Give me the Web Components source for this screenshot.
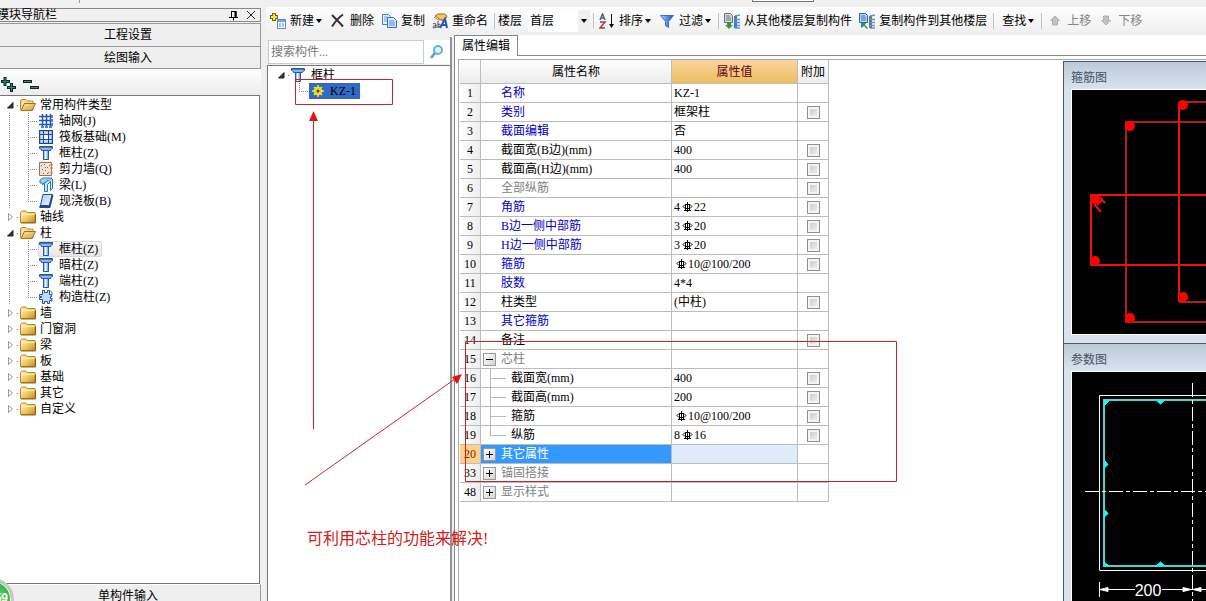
<!DOCTYPE html>
<html lang="zh-CN">
<head>
<meta charset="utf-8">
<title>属性编辑</title>
<style>
html, body { margin: 0; height: 100%; overflow: hidden; }
body { font: 12px/16px "Liberation Serif", "Noto Sans CJK SC", serif; color: #000; background: #f0f0f0; }
</style>
</head>
<body>
<app-shell></app-shell>
<script>
const GLYPHS = {
  folder: `<defs><linearGradient id="g" x2="1" y2="1"><stop offset="0" stop-color="#fff3bd"/><stop offset=".5" stop-color="#f4cd62"/><stop offset="1" stop-color="#c98a10"/></linearGradient></defs><path d="M.5 13.500V3.500L2 2h4l1.500 1.500h7.500v10z" fill="url(#g)" stroke="#a98a4a"/><path d="M1.500 5.500h13" stroke="#fff6d0"/><path d="M1 14h14.500V5" stroke="#8a6414" fill="none"/>`,
  folderopen: `<defs><linearGradient id="g" x2="1" y2="1"><stop offset="0" stop-color="#fff0b0"/><stop offset="1" stop-color="#d89a20"/></linearGradient></defs><path d="M.5 12.500v-9L2 2.500h4L7.500 4H13v9H1z" fill="#f4dc92" stroke="#a98a4a"/><path d="M1 13.500L4.500 6.500h11L12 13.500z" fill="url(#g)" stroke="#9a7420"/>`,
  grid: `<path d="M3.500 1v12M7.500 1v12M11.500 1v12M0 3.500h13M0 7.500h13M0 11.500h13" stroke="#2458b0" stroke-width="1.500" fill="none"/><path d="M2 13h3v2H2zM6 13h3v2H6zM10 13h3v2h-3zM12 2h2v3h-2zM12 6h2v3h-2zM12 10h2v3h-2z" fill="#4f83cc"/>`,
  raft: `<path d="M0 1h14v14H0z" fill="#1d4794"/><path d="M1.500 2.500h11v11h-11z" fill="#c4dafc" stroke="#9cbcf0"/><path d="M4.500 2v12M9.500 2v12M1 5.500h12M1 10.500h12" stroke="#1d4794"/><path d="M5 6h4v4H5z" fill="#fff"/>`,
  column: `<defs><linearGradient id="g"><stop offset="0" stop-color="#5a90e0"/><stop offset=".4" stop-color="#f4faff"/><stop offset="1" stop-color="#5a90dc"/></linearGradient></defs><path d="M.5 1.500h13v2l-2 1v1h-9v-1l-2-1z" fill="#8ab6f4" stroke="#2456a4"/><path d="M1 2.500h12" stroke="#4678c8"/><path d="M4.500 5.500h5v9h-5z" fill="url(#g)" stroke="#2456b0"/>`,
  wall: `<path d="M.5 1.500h12v13H.5z" fill="#efe4dc" stroke="#a86a48"/><path d="M2 4h1v1H2zM5 3h1v1H5zM8 6h1v1H8zM3 8h1v1H3zM6 9h1v1H6zM9 11h1v1H9zM4 12h1v1H4zM10 4h1v1h-1zM6 6h1v1H6zM8 12h1v1H8z" fill="#8a6a5a"/><path d="M11 4h3M11 7h3M11 12h3M12.500 2v12" stroke="#d07830" fill="none"/>`,
  beam: `<path d="M1 3l3-2h9l-2 3H8L5 7 3 6H1z" fill="#9fd0f4" stroke="#2f78b8"/><path d="M5.500 6.500v8h3v-7l3-3v9l2-2V2M3 8l6-5" fill="#c4e4fb" stroke="#2f78b8"/>`,
  slab: `<defs><linearGradient id="g" x2="1" y2="1"><stop offset="0" stop-color="#a8c8f8"/><stop offset="1" stop-color="#fff"/></linearGradient></defs><path d="M1 14.500L4 1.500h9.500l-3 11H1.500" fill="url(#g)" stroke="#1e4c9c"/><path d="M.5 14h10L13.500 2" fill="none" stroke="#1e4c9c" stroke-width="2"/>`,
  struct: `<path d="M3.500 1.500h2v2h3v-2h2v4h2v2h-1v2h1v2h-2v3h-2v-2h-3v2h-2v-4h-3v-2h2v-1h-2v-2h3z" fill="#c0daf8" stroke="#23529c"/><path d="M11 2l2 1v3M12 13l1-1V9" stroke="#4a7ac8" fill="none"/>`,
  gear: `<path d="M8 2v12M2 8h12M4 4l8 8M12 4l-8 8" stroke="#ffe81a" stroke-width="1.500"/><circle cx="8" cy="8" r="3.500" fill="none" stroke="#ffe81a" stroke-width="1.500"/><circle cx="8" cy="8" r="1.500" fill="#2a4a50"/>`,
  add: `<path d="M4 0v8M0 4h8" stroke="#7a6410" stroke-width="4"/><path d="M4 1v6M1 4h6" stroke="#ffe240" stroke-width="2"/><path d="M7.500 6.500h8v9h-8z" fill="#fff" stroke="#5a88c8"/><path d="M8 7h7v2H8z" fill="#6ea2e8"/><path d="M9 11h2M12 11h2M9 13h2M12 13h2" stroke="#4a7cc0"/>`,
  del: `<path d="M2 2c3 3 7 7 11 11.500M13 1.500C9 4 5 9 2 13.500" stroke="#333" stroke-width="2" fill="none"/>`,
  copy: `<path d="M1.500 1.500h6l2 2v8h-8z" fill="#e9f2ff" stroke="#4a7ac0"/><path d="M3 4h4M3 6h5M3 8h5" stroke="#6a9ae0"/><path d="M6.500 4.500h6l3 3v7h-9z" fill="#d4e5fd" stroke="#3f70b8"/><path d="M8 8h5M8 10h6M8 12h6" stroke="#5a8cd8"/>`,
  rename: `<path d="M3 3l3-2h7l2 2-3 6-3-2z" fill="#edcb62" stroke="#8e6c20"/><path d="M2 4l4 3 7-1" stroke="#b58a28" fill="none"/><path d="M1 11c1-1 3-1 3 1v3M4 12.500c-3 0-4 2-2 2.500l2-1M6 8v7M6 12c3-3 3 3 0 2" stroke="#444" fill="none"/><path d="M8 15l5-9 2 9M10 12h5" stroke="#2458c4" stroke-width="2" fill="none"/>`,
  sort: `<path d="M1 7l2.500-6L6 7M2 5h3" fill="none" stroke="#41619c" stroke-width="1.500"/><path d="M1 9h5l-5 6h5" fill="none" stroke="#a8383c" stroke-width="1.500"/><path d="M12.500 1v12" stroke="#111"/><path d="M10 11h5l-2.500 4z" fill="#111"/>`,
  filter: `<defs><linearGradient id="g"><stop offset="0" stop-color="#a8d0ff"/><stop offset="1" stop-color="#1c50b8"/></linearGradient></defs><path d="M1.500 2.500h13l-5 6v6l-3-2v-4z" fill="url(#g)" stroke="#3a6cc4"/>`,
  copyfrom: `<path d="M.5.500h6l2 2v7h-8z" fill="#d4d8da" stroke="#6a7478"/><path d="M2 3h4M2 5h5M2 7h5" stroke="#707880"/><path d="M3 10h4v2h2l-4 4-4-4h2z" fill="#2f9a42"/><path d="M11.500 3v12" stroke="#3c76c0" stroke-width="3"/><path d="M11 3l5-1M11 6.500h5M11 9.500h5M11 12.500h5M11 15h5" stroke="#5b94d8" stroke-width="1.500"/>`,
  copyto: `<path d="M.5.500h6l2 2v7h-8z" fill="#b8d4fb" stroke="#2e60b4"/><path d="M2 3h4M2 5h5M2 7h5" stroke="#3a6cc4"/><path d="M2 10h5l-1 2 3 3-1 1-3-3-3 2z" fill="#2f9a42"/><path d="M11.500 3v12" stroke="#5a7890" stroke-width="3"/><path d="M11 3l5-1M11 6.500h5M11 9.500h5M11 12.500h5M11 15h5" stroke="#6a94c0" stroke-width="1.500"/>`,
  up: `<path d="M8 3l4.500 4.500h-2V12h-5V7.500h-2z" fill="#c2c2c2" stroke="#b0b0b0"/>`,
  down: `<path d="M8 12L3.500 7.500h2V3h5v4.500h2z" fill="#c2c2c2" stroke="#b0b0b0"/>`,
  search: `<circle cx="9" cy="6" r="4" fill="#e3f3fd" stroke="#6aaede" stroke-width="2"/><path d="M6 9l-4 5" stroke="#5a9ed4" stroke-width="2.500"/>`,
  pin: `<path d="M5.500 4v6M5 4.500h5M10 4v6M3 10.500h9M7.500 10.500v3" fill="none" stroke="#000"/><path d="M8.500 4h2v6h-2z"/>`,
  close: `<path d="M4 4l8 8M12 4l-8 8" stroke="#222"/>`,
  expand: `<path d="M5 0v9M1 4.500h9M11.500 6v9M7 10.500h9" stroke="#0a2a28" stroke-width="3"/><path d="M5 1v7M2 4.500h7M11.500 7v7M8 10.500h7" stroke="#2f8a7c"/>`,
  collapse: `<path d="M0 4.500h9M7 10.500h9" stroke="#0a2a28" stroke-width="3"/><path d="M1 4.500h7M8 10.500h7" stroke="#2f8a7c"/>`
};

function define(name, html, setup) {
  const tpl = document.createElement('template');
  tpl.innerHTML = html;
  customElements.define(name, class extends HTMLElement {
    connectedCallback() {
      if (this.shadowRoot) return;
      const root = this.attachShadow({ mode: 'open' });
      root.append(tpl.content.cloneNode(true));
      if (setup) setup(this, root);
    }
  });
}

define('ui-icon', `<style>:host{display:block;flex:none;width:16px;height:16px}svg{display:block}</style><div></div>`,
  (el, root) => { root.querySelector('div').innerHTML = `<svg width="16" height="16" viewBox="0 0 16 16" aria-hidden="true">${GLYPHS[el.getAttribute('name')]}</svg>`; });

define('tool-button', `<style>
:host{display:block;flex:none}
button{all:unset;display:flex;align-items:center;gap:4px;height:28px;padding:0 3px 0 4px;white-space:nowrap}
:host([plain]) button{padding-left:7px}
:host([disabled]) button{color:#858585}
i{display:none;width:0;border:3px solid transparent;border-top:4px solid #000;border-bottom:0;margin-left:-2px;margin-right:1px}
:host([menu]) i{display:block}
</style><button type="button"><slot></slot><i></i></button>`,
(el, root) => {
  const b = root.querySelector('button');
  b.disabled = el.hasAttribute('disabled');
  if (el.hasAttribute('icon')) b.insertAdjacentHTML('afterbegin', `<ui-icon name="${el.getAttribute('icon')}"></ui-icon>`);
});

define('tool-strip', `<style>
:host{display:flex;align-items:center;flex:none;height:28px;margin-left:-1px;overflow:hidden;background:linear-gradient(#fdfdfd,#efefef)}
hr{flex:none;width:1px;height:16px;border:0;margin:0 1px 0 3px;background:#c0c0c0}
label{flex:none;padding:0 6px 0 2px}
.pick{display:flex;flex:none;align-items:center;width:62px;position:relative;background:linear-gradient(90deg,#fff 50px,#f0f0f0 50px)}
select{appearance:none;width:100%;height:22px;border:0;margin:0;padding:0 2px;background:none;font:inherit;color:inherit}
.pick::after{content:"";position:absolute;right:3px;border:3px solid transparent;border-top:4px solid #000;border-bottom:0;pointer-events:none}
</style>
<tool-button icon="add" menu>新建</tool-button><tool-button icon="del">删除</tool-button><tool-button icon="copy">复制</tool-button><tool-button icon="rename">重命名</tool-button><hr>
<label for="floor">楼层</label><span class="pick"><select id="floor"><option>首层</option></select></span><hr>
<tool-button icon="sort" menu>排序</tool-button><tool-button icon="filter" menu>过滤</tool-button><hr>
<tool-button icon="copyfrom">从其他楼层复制构件</tool-button><tool-button icon="copyto">复制构件到其他楼层</tool-button><hr>
<tool-button plain menu>查找</tool-button><hr>
<tool-button icon="up" disabled>上移</tool-button><tool-button icon="down" disabled>下移</tool-button>`);

define('tree-node', `<style>
:host{display:block;--v:repeating-linear-gradient(#888 0 1px,transparent 1px 2px);--h:repeating-linear-gradient(90deg,#888 0 1px,transparent 1px 2px)}
.row{display:flex;height:16px}
.lead{flex:none;display:flex;align-items:center;width:19px;height:16px}
.lead{background:var(--h) 17px 8px/3px 1px no-repeat}
.lead svg{display:block;margin-left:6px}
:host([leaf]) .lead{background:var(--v) 9px 0/1px 16px no-repeat,var(--h) 9px 8px/10px 1px no-repeat}
:host([leaf][last]) .lead{background:var(--v) 9px 0/1px 8px no-repeat,var(--h) 9px 8px/10px 1px no-repeat}
:host([leaf]) svg{display:none}
button{all:unset;display:flex;gap:4px;height:16px;line-height:16px;padding:0 4px 0 1px;white-space:nowrap}
:host([hot]) button{background:linear-gradient(#fafafa,#e6e6e6);box-shadow:inset 0 0 0 1px #dadada;border-radius:3px}
:host([selected]) button{background:#316ac5}
.kids{padding-left:19px;background:var(--v) 9px 0/1px 100% no-repeat}
:host([last]) .kids{background:none}
</style><div class="row"><span class="lead"><svg width="8" height="10"></svg></span><button type="button"></button></div><div class="kids"><slot></slot></div>`,
(el, root) => {
  const open = el.hasAttribute('open');
  root.querySelector('svg').innerHTML = open ? '<path d="M1.500 8L7 2.500V8z" fill="#333" stroke="#222"/>' : '<path d="M2.500 1.500v7l4-3.500z" fill="#fff" stroke="#999"/>';
  root.querySelector('button').innerHTML = `<ui-icon name="${el.getAttribute('icon') || (open ? 'folderopen' : 'folder')}"></ui-icon><span>${el.getAttribute('label')}</span>`;
});

define('module-nav', `<style>
:host{display:flex;flex-direction:column;width:261px;flex:none;overflow:hidden;padding-top:8px;box-sizing:border-box}
header{display:flex;align-items:center;flex:none;height:14px;box-sizing:border-box;border:1px solid #888;border-left:0;font-size:12px}
h1{font:inherit;flex:1;margin:0 0 0 -3px;white-space:nowrap}
header button{all:unset;margin-right:1px}
.sec{flex:none;height:22px;box-sizing:border-box;margin:0;padding:0 4px 0 0;border:1px solid #999;border-width:0 1px 1px 0;background:#efefef;font:inherit;text-align:center}
.first{height:24px;margin-top:1px;border-top-width:1px}
.end{margin-bottom:-6px;border-top:1px solid #fff;height:23px}
.bar{display:flex;gap:7px;flex:none;height:26px;box-sizing:border-box;padding:6px 0 0;background:linear-gradient(#fff,#ececec)}
.bar button{all:unset}
.tree{flex:1;min-height:0;overflow:hidden;background:#fff;border:1px solid #777;border-width:1px 1px 1px 0;margin-right:1px;padding-top:1px}
</style>
<header><h1>模块导航栏</h1><button aria-label="固定"><ui-icon name="pin"></ui-icon></button><button aria-label="关闭"><ui-icon name="close"></ui-icon></button></header>
<button class="sec first">工程设置</button><button class="sec">绘图输入</button>
<div class="bar"><button aria-label="展开"><ui-icon name="expand"></ui-icon></button><button aria-label="折叠"><ui-icon name="collapse"></ui-icon></button></div>
<div class="tree">
<tree-node label="常用构件类型" open>
<tree-node leaf icon="grid" label="轴网(J)"></tree-node><tree-node leaf icon="raft" label="筏板基础(M)"></tree-node><tree-node leaf icon="column" label="框柱(Z)"></tree-node><tree-node leaf icon="wall" label="剪力墙(Q)"></tree-node><tree-node leaf icon="beam" label="梁(L)"></tree-node><tree-node leaf last icon="slab" label="现浇板(B)"></tree-node>
</tree-node>
<tree-node label="轴线"></tree-node>
<tree-node label="柱" open>
<tree-node leaf hot icon="column" label="框柱(Z)"></tree-node><tree-node leaf icon="column" label="暗柱(Z)"></tree-node><tree-node leaf icon="column" label="端柱(Z)"></tree-node><tree-node leaf last icon="struct" label="构造柱(Z)"></tree-node>
</tree-node>
<tree-node label="墙"></tree-node><tree-node label="门窗洞"></tree-node><tree-node label="梁"></tree-node><tree-node label="板"></tree-node><tree-node label="基础"></tree-node><tree-node label="其它"></tree-node><tree-node last label="自定义"></tree-node>
</div>
<button class="sec end">单构件输入</button>`);

define('component-list', `<style>
:host{display:flex;flex-direction:column;width:185px;flex:none;box-sizing:border-box;border-right:2px solid #8f9499;padding-top:3px;margin-top:2px}
.find{display:flex;align-items:center;flex:none;height:24px;background:#fff;margin:0 0 1px 1px}
input{flex:1;min-width:0;height:24px;box-sizing:border-box;border:1px solid #c8ccd0;padding:0 2px;margin:0;font:inherit}
input::placeholder{color:#777;opacity:1}
.find button{all:unset;padding:0 5px}
.tree{flex:1;background:#fff;border:1px solid #777;border-width:1px 0 0 1px;padding:1px 0 0 3px}
</style><div class="find"><input type="search" aria-label="搜索构件" placeholder="搜索构件..."><button aria-label="搜索"><ui-icon name="search"></ui-icon></button></div>
<div class="tree"><tree-node open last icon="column" label="框柱"><tree-node leaf last selected icon="gear" label="KZ-1"></tree-node></tree-node></div>`);

const BAR = '<svg class="bar" width="12" height="12" role="img" aria-label="Φ"><path d="M6.500 1v10M4.500 3v6M8.500 3v6M4 3.500h5l2 2-2 2H4l-2-2zM3 9.500h7" fill="none" stroke="#000"/></svg>';
/* number, name, value, has tick box, style of the name, expander sign */
const ROWS = [
  [1, '名称', 'KZ-1', 0, 'key'], [2, '类别', '框架柱', 1, 'key'], [3, '截面编辑', '否', 0, 'key'],
  [4, '截面宽(B边)(mm)', '400', 1, ''], [5, '截面高(H边)(mm)', '400', 1, ''], [6, '全部纵筋', '', 1, 'dim'],
  [7, '角筋', `4${BAR}22`, 1, 'key'], [8, 'B边一侧中部筋', `3${BAR}20`, 1, 'key'], [9, 'H边一侧中部筋', `3${BAR}20`, 1, 'key'],
  [10, '箍筋', `${BAR}10@100/200`, 1, 'key'], [11, '肢数', '4*4', 0, 'key'], [12, '柱类型', '(中柱)', 1, ''],
  [13, '其它箍筋', '', 0, 'key'], [14, '备注', '', 1, ''], [15, '芯柱', '', 0, 'dim', '−'],
  [16, '截面宽(mm)', '400', 1, 'sub'], [17, '截面高(mm)', '200', 1, 'sub'], [18, '箍筋', `${BAR}10@100/200`, 1, 'sub'],
  [19, '纵筋', `8${BAR}16`, 1, 'sub end'], [20, '其它属性', '', 0, 'cur', '+'], [33, '锚固搭接', '', 0, 'dim', '+'], [48, '显示样式', '', 0, 'dim', '+']
];
define('property-grid', `<style>
:host{display:block;flex:none;width:370px}
table{border-collapse:separate;border-spacing:0;table-layout:fixed;width:369px;line-height:18px}
th,td{box-sizing:border-box;height:19px;padding:0;border:solid #bcbcbc;border-width:0 1px 1px 0;white-space:nowrap;overflow:hidden;font-weight:normal;text-align:left}
thead th{height:24px;text-align:center;background:linear-gradient(#fefefe,#ececec)}
thead .val{background:linear-gradient(#f9d69d,#efbd60);color:#5c0026}
tbody th{text-align:center;background:linear-gradient(90deg,#fff,#ededed)}
.name{padding-left:20px;position:relative}
.key{color:#0000c8}.dim{color:#808080}
.sub{padding-left:30px;background:linear-gradient(#bbb,#bbb) 9px 0/1px 100% no-repeat,linear-gradient(#bbb,#bbb) 9px 9px/16px 1px no-repeat}
.sub.end{background-size:1px 9px,16px 1px}
.cur{background:#3399ff;color:#fff}
.cur + td{background:#deebfb}
tr.on th{background:#ffd08a;color:#703000}
.name div{display:flex;align-items:center}
.name button{flex:none;box-sizing:border-box;width:13px;height:13px;margin:0 5px 0 -18px;padding:0;border:1px solid #999;background:linear-gradient(135deg,#fff,#d4d4d4);position:relative}
.name button::before,.name button.plus::after{content:"";position:absolute;left:2px;top:5px;width:7px;height:1px;background:#000}
.name button.plus::after{left:5px;top:2px;width:1px;height:7px}
.v{padding-left:2px}
.bar{vertical-align:-2px;margin:0 1px}
.tick{text-align:center;line-height:0}
input{appearance:none;display:inline-block;box-sizing:border-box;width:13px;height:13px;margin:0;border:1px solid #8e8f8f;background:linear-gradient(135deg,#c4c4c4,#f6f6f6);box-shadow:inset 0 0 0 2px #f4f4f4;vertical-align:middle}
</style><table><colgroup><col style="width:21px"><col style="width:191px"><col style="width:126px"><col style="width:31px"></colgroup>
<thead><tr><th></th><th>属性名称</th><th class="val">属性值</th><th>附加</th></tr></thead><tbody></tbody></table>`,
(el, root) => {
  root.querySelector('tbody').innerHTML = ROWS.map(([n, name, value, tick, cls, sign]) =>
    `<tr${cls === 'cur' ? ' class="on"' : ''}><th scope="row">${n}</th><td class="name ${cls}">${sign ? `<div><button class="${sign === '+' ? 'plus' : ''}" aria-label="${name}"></button>${name}</div>` : name}</td><td class="v">${value}</td><td class="tick">${tick ? `<input type="checkbox" aria-label="附加 ${n}">` : ''}</td></tr>`).join('');
});

define('preview-card', `<style>
:host{display:block;box-sizing:border-box;border:1px solid #4a5868;border-width:1px 0 0 1px;padding:0 0 8px 7px;background:linear-gradient(#bccbd9,#d8e3ef 28px)}
h2{margin:0;height:27px;font:inherit;line-height:32px;color:#44525f}
.view{display:block;border:1px solid #fff;border-width:1px 0 1px 1px;background:#000;overflow:hidden}
</style><h2></h2><div class="view"><slot></slot></div>`,
(el, root) => { root.querySelector('h2').textContent = el.getAttribute('caption'); });

define('preview-column', `<style>
:host{display:block;flex:none;width:143px;margin-top:1px;overflow:hidden}
svg{display:block}
</style>
<preview-card caption="箍筋图"><svg width="134" height="244" viewBox="1072 90 134 244" fill="none" stroke-width="2">
<g stroke="#b41c1c"><path d="M1179 102h40M1179 302h40M1240 122H1126V322h114"/></g>
<g stroke="#f01010"><path d="M1179 102v200M1240 195H1091V265h149M1094 204l7 8M1100 197l5 6M1097 205l6-6"/></g>
<g fill="#f00"><circle cx="1183" cy="105" r="5"/><circle cx="1130" cy="126" r="5"/><circle cx="1130" cy="318" r="5"/><circle cx="1095" cy="199" r="5"/><circle cx="1095" cy="261" r="5"/><circle cx="1183" cy="297" r="5"/></g></svg></preview-card>
<preview-card caption="参数图"><svg width="134" height="244" viewBox="1072 372 134 244" fill="none" stroke="#fff">
<path d="M1240 395.500H1099.500V570.500h140"/><path d="M1240 400H1104V566h136" stroke="#3cdada" stroke-width="2"/>
<path d="M1085 491.500h140M1192.500 383v230" stroke-dasharray="14 3 4 3"/>
<path d="M1157 401h7l-3.500 3zM1105 461l3 3.500-3 3zM1105 510l3 3.500-3 3zM1157 565h7l-3.500-3zM1104 401h5l-4 4zM1104 562l4 3-4 1z" fill="#1ff" stroke="#1ff"/>
<path d="M1099.500 582v15M1100 589.500h35M1162 589.500h44"/><path d="M1100 589.500l8-2v4zM1191 589.500l-8-2v4zM1193 589.500l8-2v4z" fill="#fff"/>
<text x="1148" y="596" font-family="Liberation Sans, sans-serif" font-size="16" text-anchor="middle" fill="#fff" stroke="none">200</text></svg></preview-card>`);

define('property-editor', `<style>
:host{display:flex;flex-direction:column;flex:1;min-width:0;background:#fff;margin-left:2px}
.tabs{display:flex;flex:none;height:21px;box-sizing:border-box}
.tabs button{all:unset;box-sizing:border-box;padding:0 7px;line-height:20px;border:1px solid #888;border-bottom:0}
.tabs span{flex:1;border-bottom:1px solid #888}
.body{display:flex;flex:1;min-height:0;justify-content:space-between;border-left:1px solid #888;padding:3px 0 0 3px}
.in{display:flex;flex:1;justify-content:space-between;border:1px solid #aaa;border-width:1px 0 0 1px;overflow:hidden}
property-grid{margin-left:1px}
</style><div class="tabs"><button>属性编辑</button><span></span></div><div class="body"><div class="in"><property-grid></property-grid><preview-column></preview-column></div></div>`);

define('redline-notes', `<style>
:host{position:absolute;inset:0;pointer-events:none;overflow:hidden}
svg{position:absolute;left:0;top:0}
p{position:absolute;left:307px;top:528px;margin:0;font:16px/22px "Liberation Serif","Noto Sans CJK SC",serif;color:#cf2020}
.badge{position:absolute;left:-28px;bottom:-19px;box-sizing:border-box;width:42px;height:42px;border:3px solid #c4ccc4;border-radius:50%;background:radial-gradient(#6fd873,#20a03c);box-shadow:inset 0 0 0 1px #fff;color:#fff;font:bold 12px/34px "Liberation Sans",sans-serif;text-align:right;padding-right:3px}
</style><svg width="1000" height="600" fill="none" stroke="#c8242a"><path d="M295.500 79.500h97v25h-97zM465.500 341.500h431v140h-431zM313.500 429V120M305 485l150-106"/><path d="M313.500 111l4.500 10h-9zM462 374l-5 10-5-7z" fill="#ec1010" stroke="none"/></svg>
<p>可利用芯柱的功能来解决!</p><span class="badge">59</span>`);

define('app-shell', `<style>
:host{display:flex;height:100vh;overflow:hidden;position:relative}
.work{display:flex;flex-direction:column;flex:1;min-width:0;margin-left:6px;padding-top:7px}
.panes{display:flex;flex:1;min-height:0}
.edge{position:absolute;top:0;left:79px;width:1px;height:3px;background:#999}
.tip{position:absolute;top:0;left:752px;width:60px;height:1px;border:1px solid #777;border-top:0;background:#fff}
</style><module-nav></module-nav><div class="work"><tool-strip></tool-strip><div class="panes"><component-list></component-list><property-editor></property-editor></div></div><i class="edge"></i><i class="tip"></i><redline-notes></redline-notes>`);
</script>
</body>
</html>
